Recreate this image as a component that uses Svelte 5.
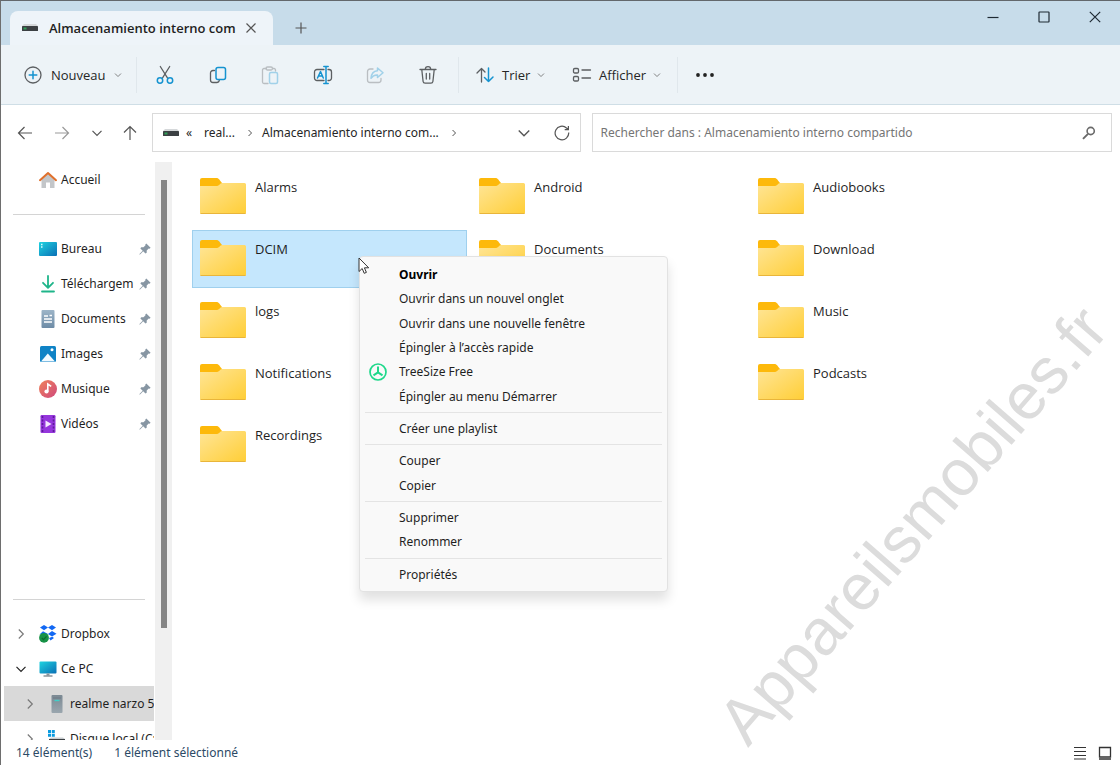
<script lang="ts">
  let selectedFolder = $state('DCIM');
  let search = $state('');

  const quickAccess = [
    { name: 'Bureau', icon: 'desktop' },
    { name: 'Téléchargem', icon: 'download' },
    { name: 'Documents', icon: 'document' },
    { name: 'Images', icon: 'picture' },
    { name: 'Musique', icon: 'music' },
    { name: 'Vidéos', icon: 'video' }
  ];

  const tree = [
    { name: 'Dropbox', icon: 'dropbox', open: false, nested: false, active: false },
    { name: 'Ce PC', icon: 'pc', open: true, nested: false, active: false },
    { name: 'realme narzo 50', icon: 'phone', open: false, nested: true, active: true },
    { name: 'Disque local (C:)', icon: 'disk', open: false, nested: true, active: false }
  ];

  const tools = [
    { icon: 'cut', label: 'Couper', disabled: false },
    { icon: 'copy', label: 'Copier', disabled: false },
    { icon: 'paste', label: 'Coller', disabled: true },
    { icon: 'rename', label: 'Renommer', disabled: false },
    { icon: 'share', label: 'Partager', disabled: true },
    { icon: 'trash', label: 'Supprimer', disabled: false }
  ];

  // null keeps a free slot in the grid
  const folders = [
    'Alarms', 'Android', 'Audiobooks',
    'DCIM', 'Documents', 'Download',
    'logs', null, 'Music',
    'Notifications', null, 'Podcasts',
    'Recordings'
  ];

  const menuGroups = [
    [
      'Ouvrir',
      'Ouvrir dans un nouvel onglet',
      'Ouvrir dans une nouvelle fenêtre',
      'Épingler à l’accès rapide',
      'TreeSize Free',
      'Épingler au menu Démarrer'
    ],
    ['Créer une playlist'],
    ['Couper', 'Copier'],
    ['Supprimer', 'Renommer'],
    ['Propriétés']
  ];
</script>

{#snippet chevron(size)}
  <svg class="line" width={size} height={size} viewBox="0 0 12 12"><path d="M1.5 3.8 6 8.3l4.500-4.500" /></svg>
{/snippet}

{#snippet chevronRight(size)}
  <svg class="line" width={size} height={size} viewBox="0 0 12 12"><path d="M3.800 1.500 8.300 6l-4.500 4.500" /></svg>
{/snippet}

{#snippet drive()}
  <svg width="18" height="18" viewBox="0 0 18 18">
    <path d="M3 5h12l2 2H1z" fill="#d5d8da" />
    <rect x="1" y="7" width="16" height="5" rx=".6" fill="#3c4043" />
    <rect x="2.500" y="8.500" width="3" height="2" fill="#2f9e57" />
  </svg>
{/snippet}

{#snippet toolIcon(name)}
  <svg class="tool-icon" width="20" height="20" viewBox="0 0 20 20">
    {#if name === 'new'}
      <circle cx="10" cy="10" r="8" />
      <path class="blue" d="M10 6.200v7.600M6.200 10h7.600" />
    {:else if name === 'cut'}
      <path d="M5.300 1.500 12.600 13.200M14.700 1.500 7.400 13.200" />
      <circle class="blue" cx="5" cy="15.500" r="2.700" />
      <circle class="blue" cx="15" cy="15.500" r="2.700" />
    {:else if name === 'copy'}
      <path d="M6.500 5.500H5A2.500 2.500 0 0 0 2.500 8v7A2.500 2.500 0 0 0 5 17.500h4A2.500 2.500 0 0 0 11.300 15.500" />
      <rect class="blue" x="8" y="2.500" width="9.500" height="12" rx="2" />
    {:else if name === 'paste'}
      <path d="M6.500 3.500H4A1.500 1.500 0 0 0 2.500 5v12A1.500 1.500 0 0 0 4 18.500h4M12.500 3.500h1.500A1.500 1.500 0 0 1 15.500 5v1" />
      <rect x="6" y="2" width="6.500" height="3" rx="1.500" />
      <rect class="blue" x="9.500" y="7.500" width="8" height="11" rx="1.500" />
    {:else if name === 'rename'}
      <path d="M11 4.500H4A2.500 2.500 0 0 0 1.500 7v6A2.500 2.500 0 0 0 4 15.500h7M15 4.500h1A2.500 2.500 0 0 1 18.500 7v6a2.500 2.500 0 0 1-2.500 2.500h-1" />
      <path class="blue" d="M4.500 13 7.500 6.500 10.300 13M5.500 11h4M13 1.500v17M10.800 1.500h4.400M10.800 18.500h4.400" />
    {:else if name === 'share'}
      <path d="M8 4H5a2.500 2.500 0 0 0-2.500 2.500v8.500A2.500 2.500 0 0 0 5 17.500h8.500a2.500 2.500 0 0 0 2.500-2.500v-1.500" />
      <path class="blue" d="M12.500 3 18 7.800l-5.500 4.700V10C9.500 9.800 7.500 11 6 13.300 6.300 9 8.500 6 12.500 5.700z" />
    {:else if name === 'trash'}
      <path d="M2 4.500h16M7.300 4.300a2.700 2.700 0 0 1 5.400 0M3.800 4.700l1.300 11.800a2 2 0 0 0 2 1.700h5.800a2 2 0 0 0 2-1.700l1.300-11.800M8.300 8.500v5.500M11.700 8.500v5.500" />
    {:else if name === 'sort'}
      <path d="M6.500 17V3.500M2 8l4.500-4.500L10 7" />
      <path class="blue" d="M13.500 3v13.500M9.500 12.500l4 4 4.500-4.500" />
    {:else if name === 'view'}
      <rect x="1.500" y="3.500" width="5" height="4.500" rx="1.200" />
      <rect x="1.500" y="11.500" width="5" height="4.500" rx="1.200" />
      <path d="M10 5h8.500M10 13h8.500" />
    {/if}
  </svg>
{/snippet}

{#snippet placeIcon(name)}
  <svg width="18" height="18" viewBox="0 0 18 18">
    {#if name === 'home'}
      <path d="M2.500 8 9 2.500 15.500 8v9H11v-5.500H7V17H2.500z" fill="#c3c6c9" />
      <path d="M1 9.200 9 2l8 7.200" fill="none" stroke="#e0702c" stroke-width="2" stroke-linecap="round" stroke-linejoin="round" />
    {:else if name === 'desktop'}
      <rect x="0" y="2" width="18" height="14" rx="1" fill="url(#desk)" />
      <path d="M2 4.500h1.500M2 7h1.500" stroke="#d8fbff" stroke-width="1.300" />
    {:else if name === 'download'}
      <path d="M9 1v11M4 7.800l5 5 5-5M3 16.500h12" fill="none" stroke="#1fb58a" stroke-width="1.800" stroke-linecap="round" stroke-linejoin="round" />
    {:else if name === 'document'}
      <rect x="2.500" y="0" width="13" height="18" rx="1" fill="url(#doc)" />
      <path d="M5 6h4M5 9h8M5 12h8M10.500 5.500h2.500" stroke="#fff" stroke-width="1.400" />
    {:else if name === 'picture'}
      <rect x="1" y="1" width="16" height="16" rx="1.500" fill="#0f83c6" />
      <path d="M2 16.500 8.800 8.500l7.200 8z" fill="#f2faff" />
      <circle cx="13" cy="4.800" r="1.500" fill="#fff" />
    {:else if name === 'music'}
      <circle cx="9" cy="9" r="9" fill="url(#mus)" />
      <circle cx="7.500" cy="11.500" r="2.100" fill="#fff" />
      <path d="M8.800 11.500V4l3.400 2.300" fill="none" stroke="#fff" stroke-width="1.600" />
    {:else if name === 'video'}
      <rect x="1.500" y="0" width="15" height="18" rx="1.200" fill="#9536dc" />
      <path d="M3.500 1v16M14.500 1v16" stroke="#5e1b9a" stroke-width="1.600" stroke-dasharray="2 1.500" />
      <path d="M6.500 5.500v7l6-3.500z" fill="#f6e9ff" />
    {:else if name === 'dropbox'}
      <path d="m5 0 4 2.600-4 2.600-4-2.600zM13 0l4 2.600-4 2.600-4-2.600zM13 6l4.500 2.800-4.500 2.800L9 9zM4 6.200 9 9l-3 2-5-2zM10 13l3.300-1.200L15 13l-3.500 2.500z" fill="#1268f3" />
      <circle cx="5" cy="12.800" r="4.900" fill="#179246" />
      <path d="m2.800 13 1.700 1.600 3-3.200" fill="none" stroke="#0c6a2f" stroke-width="1.300" />
    {:else if name === 'pc'}
      <rect x="0.500" y="1.500" width="17" height="12" rx="1" fill="url(#desk)" />
      <path d="M7.500 13.500h3v2h-3z" fill="#8a949b" />
      <path d="M4.500 16h9" stroke="#6f7a82" stroke-width="1.200" />
    {:else if name === 'phone'}
      <rect x="3.500" y="0" width="11" height="18" rx="1" fill="url(#tower)" />
      <path d="M6.500 5.500h5" stroke="#3fd0c9" stroke-width="1.400" />
      <path d="M5 3h8" stroke="#6c7983" />
    {:else if name === 'disk'}
      <path d="M0 0h3v3H0zM3.800 0h3v3h-3zM0 3.800h3v3H0zM3.800 3.800h3v3h-3z" fill="#0a9be0" />
      <path d="M3 7.500h12l2 1.500H1z" fill="#c9cdd0" />
      <rect x="1" y="9" width="16" height="5" fill="#3c4043" />
    {/if}
  </svg>
{/snippet}

<!-- gradients shared by the icons -->
<svg class="defs" width="0" height="0" aria-hidden="true">
  <defs>
    <linearGradient id="desk" x1="0" y1="0" x2="1" y2="1">
      <stop offset="0" stop-color="#1fd3e0" />
      <stop offset="1" stop-color="#0a6fb5" />
    </linearGradient>
    <linearGradient id="doc" x1="0" y1="0" x2="0" y2="1">
      <stop offset="0" stop-color="#9db5c8" />
      <stop offset="1" stop-color="#6d8ba6" />
    </linearGradient>
    <linearGradient id="mus" x1="0" y1="0" x2="1" y2="1">
      <stop offset="0" stop-color="#f0825a" />
      <stop offset="1" stop-color="#cf4a7c" />
    </linearGradient>
    <linearGradient id="tower" x1="0" y1="0" x2="0" y2="1">
      <stop offset="0" stop-color="#7b8993" />
      <stop offset="1" stop-color="#9aa6ae" />
    </linearGradient>
    <linearGradient id="fold" x1="0" y1="0" x2="1" y2="1">
      <stop offset="0" stop-color="#ffe596" />
      <stop offset="1" stop-color="#ffce36" />
    </linearGradient>
  </defs>
</svg>

<div class="window">
  <header class="tabs">
    <div class="tab">
      {@render drive()}
      <span class="tab-title">Almacenamiento interno com</span>
      <button class="icon-btn" aria-label="Fermer l'onglet">
        <svg class="line" width="12" height="12" viewBox="0 0 12 12"><path d="m1.500 1.500 9 9m0-9-9 9" /></svg>
      </button>
    </div>
    <button class="icon-btn add-tab" aria-label="Nouvel onglet">
      <svg class="line" width="12" height="12" viewBox="0 0 12 12"><path d="M6 .5v11M.5 6h11" /></svg>
    </button>
    <div class="controls">
      <button aria-label="Réduire">
        <svg class="line" width="12" height="12" viewBox="0 0 12 12"><path d="M.5 6.500h11" /></svg>
      </button>
      <button aria-label="Agrandir">
        <svg class="line" width="12" height="12" viewBox="0 0 12 12"><rect x="1" y="1" width="10" height="10" rx=".5" /></svg>
      </button>
      <button aria-label="Fermer">
        <svg class="line" width="12" height="12" viewBox="0 0 12 12"><path d="m.8.8 10.400 10.400m0-10.400L.8 11.200" /></svg>
      </button>
    </div>
  </header>

  <div class="toolbar">
    <button class="text-btn new">{@render toolIcon('new')}<span>Nouveau</span>{@render chevron(8)}</button>
    <div class="tools">
      {#each tools as tool}
        <button class="icon-btn" aria-label={tool.label} disabled={tool.disabled}>{@render toolIcon(tool.icon)}</button>
      {/each}
    </div>
    <button class="text-btn sort">{@render toolIcon('sort')}<span>Trier</span>{@render chevron(8)}</button>
    <button class="text-btn view">{@render toolIcon('view')}<span>Afficher</span>{@render chevron(8)}</button>
    <button class="icon-btn more" aria-label="Plus">
      <svg width="20" height="20" viewBox="0 0 20 20" fill="#222">
        <circle cx="3" cy="10" r="1.900" /><circle cx="10" cy="10" r="1.900" /><circle cx="17" cy="10" r="1.900" />
      </svg>
    </button>
  </div>

  <div class="address-row">
    <nav class="history">
      <button class="icon-btn" aria-label="Précédent">
        <svg class="line" width="16" height="16" viewBox="0 0 16 16"><path d="M15 8H1.500M7.500 2l-6 6 6 6" /></svg>
      </button>
      <button class="icon-btn faded" aria-label="Suivant">
        <svg class="line" width="16" height="16" viewBox="0 0 16 16"><path d="M1 8h13.500M8.500 2l6 6-6 6" /></svg>
      </button>
      <button class="icon-btn" aria-label="Récents">{@render chevron(12)}</button>
      <button class="icon-btn" aria-label="Dossier parent">
        <svg class="line" width="16" height="16" viewBox="0 0 16 16"><path d="M8 15V1.500M2 7.500l6-6 6 6" /></svg>
      </button>
    </nav>
    <div class="path">
      {@render drive()}
      <span class="laquo">«</span>
      <button class="crumb">real...</button>
      {@render chevronRight(8)}
      <button class="crumb">Almacenamiento interno com...</button>
      {@render chevronRight(8)}
      <div class="path-actions">
        <button class="icon-btn" aria-label="Historique">{@render chevron(14)}</button>
        <button class="icon-btn" aria-label="Actualiser">
          <svg class="line" width="16" height="16" viewBox="0 0 16 16"><path d="M14.700 7.500A6.800 6.800 0 1 1 12.500 3l1.800 1.500M14.400 1v3.700h-3.700" /></svg>
        </button>
      </div>
    </div>
    <label class="search">
      <input type="text" bind:value={search} aria-label="Rechercher" placeholder="Rechercher dans : Almacenamiento interno compartido" />
      <svg width="14" height="14" viewBox="0 0 14 14" fill="none" stroke="#6a6a6a" stroke-width="1.600">
        <circle cx="8.700" cy="5" r="3.600" /><path d="M6 7.800 1 12.800" stroke-width="1.900" />
      </svg>
    </label>
  </div>

  <div class="body">
    <aside class="sidebar">
      <button class="place"><span class="twist"></span>{@render placeIcon('home')}<span class="name">Accueil</span></button>
      <hr />
      {#each quickAccess as item}
        <button class="place">
          <span class="twist"></span>
          {@render placeIcon(item.icon)}
          <span class="name">{item.name}</span>
          <svg class="pin" width="12" height="12" viewBox="0 0 12 12"><path d="M7.300.4 11.600 4.700 10.500 5.700 9.700 5.500 7.700 7.500 7.700 9.800 6.500 10.600 4.200 8.300 1 11.500.4 11.600.5 11 3.700 7.800 1.400 5.500 2.200 4.300 4.500 4.300 6.500 2.300 6.300 1.500z" /></svg>
        </button>
      {/each}
      <hr class="low" />
      {#each tree as item}
        <button class="place" class:nested={item.nested} class:active={item.active}>
          <span class="twist" class:open={item.open}>
            {#if item.open}{@render chevron(12)}{:else}{@render chevronRight(12)}{/if}
          </span>
          {@render placeIcon(item.icon)}
          <span class="name">{item.name}</span>
        </button>
      {/each}
    </aside>
    <div class="track"><div class="thumb"></div></div>
    <main class="files">
      {#each folders as folder}
        {#if folder}
          <button class="folder" class:selected={folder === selectedFolder} onclick={() => (selectedFolder = folder)}>
            <svg width="46" height="38" viewBox="0 0 46 38">
              <path d="M0 3a2 2 0 0 1 2-2h14c1.500 0 2.300.5 3 1.300L22 6v8H0z" fill="#fdb90b" />
              <path d="M0 9h16c1.500 0 2.500-.4 3.400-1.300l1.200-1.100c.5-.4 1-.6 1.700-.6H44.500A1.500 1.500 0 0 1 46 7.500v28a1.500 1.500 0 0 1-1.500 1.500h-43A1.500 1.500 0 0 1 0 35.500z" fill="url(#fold)" />
              <path d="M.5 36.500h45" stroke="#e9b53a" />
            </svg>
            <span>{folder}</span>
          </button>
        {:else}
          <div></div>
        {/if}
      {/each}
    </main>
  </div>

  <footer class="status">
    <span>14 élément(s)</span>
    <span>1 élément sélectionné</span>
    <div class="modes">
      <button class="icon-btn" aria-label="Détails">
        <svg width="14" height="14" viewBox="0 0 14 14"><path d="M1 1.500h12M1 5.500h12M1 9.500h12M1 13h12" stroke="#333" stroke-width="1.200" /></svg>
      </button>
      <button class="icon-btn" aria-label="Grandes icônes">
        <svg width="14" height="14" viewBox="0 0 14 14"><path d="M1.500 1.500h11v9.500h-11zM1 13h12" fill="none" stroke="#333" stroke-width="1.300" /></svg>
      </button>
    </div>
  </footer>

  <div class="watermark">Appareilsmobiles.fr</div>

  <div class="menu" role="menu">
    {#each menuGroups as group, i}
      {#if i > 0}<hr />{/if}
      {#each group as entry}
        <button role="menuitem" class:default={entry === 'Ouvrir'}>
          <span class="menu-icon">
            {#if entry === 'TreeSize Free'}
              <svg width="18" height="18" viewBox="0 0 18 18" fill="none" stroke="#1fd88b">
                <circle cx="9" cy="9" r="8" stroke-width="1.700" />
                <path d="M9 3.500v6M9 9.300l-4.500 3M9 9.300l4.500 3" stroke-width="2" />
              </svg>
            {/if}
          </span>
          {entry}
        </button>
      {/each}
    {/each}
  </div>

  <svg class="cursor" width="12" height="18" viewBox="0 0 12 18">
    <path d="M1 1v13.500l3.200-3 2 4.800 2.200-.9-2-4.600H10.700z" fill="#fff" stroke="#333" stroke-width="1" />
  </svg>
</div>

<style>
  :global(body) {
    margin: 0;
  }
  .window {
    position: relative;
    box-sizing: border-box;
    height: 100vh;
    min-height: 640px;
    display: flex;
    flex-direction: column;
    overflow: hidden;
    background: #fff;
    border-top: 1px solid #63686c;
    border-left: 1px solid #6e6e6e;
    font-family: "Noto Sans", "Open Sans", sans-serif;
    font-size: 12px;
    line-height: 18px;
    color: #1f1f1f;
  }
  .defs {
    position: absolute;
  }
  button {
    margin: 0;
    padding: 0;
    border: none;
    background: none;
    font: inherit;
    color: inherit;
    text-align: left;
    white-space: nowrap;
  }
  svg {
    display: block;
    flex: none;
  }
  hr {
    margin: 0;
    border: none;
    border-top: 1px solid #d4d4d4;
  }
  .line {
    fill: none;
    stroke: currentColor;
    stroke-width: 1.2;
  }
  .icon-btn {
    display: flex;
    align-items: center;
    justify-content: center;
    color: #555;
  }
  .tabs,
  .toolbar,
  .files {
    font-family: "Open Sans", "Noto Sans", sans-serif;
    font-size: 13px;
  }

  .tabs {
    display: flex;
    align-items: stretch;
    height: 44px;
    flex: none;
    background: #c7dcea;
  }
  .tab {
    display: flex;
    align-items: center;
    box-sizing: border-box;
    width: 263px;
    margin: 10px 0 0 9px;
    padding: 0 16px 0 11px;
    border-radius: 8px 8px 0 0;
    background: #eef4f9;
  }
  .tab-title {
    flex: 1;
    margin-left: 10px;
    font-weight: 600;
  }
  .add-tab {
    width: 56px;
    padding-top: 10px;
  }
  .controls {
    display: flex;
    margin-left: auto;
  }
  .controls button {
    display: flex;
    align-items: center;
    justify-content: center;
    width: 51px;
    height: 32px;
    color: #1f2a33;
  }

  .toolbar {
    display: flex;
    align-items: center;
    height: 59px;
    flex: none;
    padding-left: 22px;
    background: #edf3f7;
    border-bottom: 1px solid #cfdee6;
  }
  .text-btn {
    display: flex;
    align-items: center;
    gap: 7px;
    height: 36px;
    color: #262626;
  }
  .text-btn .line {
    color: #666;
  }
  .new {
    width: 113px;
    gap: 8px;
  }
  .tools {
    display: flex;
    justify-content: space-between;
    align-items: center;
    width: 299px;
    padding: 0 12px 0 10px;
    border-left: 1px solid #e0e7ec;
    border-right: 1px solid #e0e7ec;
  }
  .tools .icon-btn {
    width: 36px;
    height: 36px;
  }
  .tools .icon-btn:disabled {
    opacity: 0.35;
  }
  .tool-icon {
    fill: none;
    stroke: #5c5f62;
    stroke-width: 1.3;
    stroke-linecap: round;
    stroke-linejoin: round;
  }
  .tool-icon .blue {
    stroke: #1593d0;
    stroke-width: 1.5;
  }
  .sort {
    width: 96px;
    padding-left: 16px;
    box-sizing: border-box;
  }
  .view {
    width: 123px;
    padding-left: 17px;
    box-sizing: border-box;
    border-right: 1px solid #e0e7ec;
  }
  .more {
    width: 54px;
    height: 36px;
  }

  .address-row {
    display: grid;
    grid-template-columns: 140px 429fr 521fr;
    column-gap: 11px;
    flex: none;
    padding: 8px 8px 10px 0;
  }
  .history {
    display: flex;
    align-items: center;
    gap: 19px;
    padding-left: 16px;
  }
  .history .icon-btn {
    height: 36px;
  }
  .history .faded {
    width: 20px;
    color: #999;
  }
  .path,
  .search {
    display: flex;
    align-items: center;
    box-sizing: border-box;
    height: 39px;
    min-width: 0;
    border: 1px solid #dadada;
  }
  .path {
    padding: 0 10px 0 9px;
    color: #262626;
  }
  .laquo {
    width: 10px;
    margin-left: 6px;
  }
  .crumb {
    margin: 0 11px 0 8px;
  }
  .path-actions {
    display: flex;
    gap: 23px;
    margin-left: auto;
  }
  .search {
    padding: 0 15px 0 8px;
  }
  .search input {
    flex: 1;
    min-width: 0;
    padding: 0;
    border: none;
    outline: none;
    background: none;
    font: inherit;
    color: inherit;
  }
  .search input::placeholder {
    color: #757575;
    opacity: 1;
  }

  .body {
    display: flex;
    flex: 1;
    min-height: 0;
  }
  .sidebar {
    width: 153px;
    flex: none;
    overflow: hidden;
  }
  .sidebar hr {
    margin: 17px 9px 16px 12px;
  }
  .sidebar hr.low {
    margin-top: 158px;
  }
  .place {
    display: flex;
    align-items: center;
    box-sizing: border-box;
    width: 150px;
    height: 35px;
    margin-left: 3px;
    padding: 0 3px 0 8px;
    overflow: hidden;
  }
  .place.nested {
    padding: 0 0 0 17px;
  }
  .place.active {
    background: #d9d9d9;
  }
  .twist {
    display: flex;
    justify-content: center;
    width: 17px;
    flex: none;
    margin-right: 10px;
    color: #7a7a7a;
  }
  .twist.open {
    color: #222;
  }
  .place .name {
    flex: 1;
    min-width: 0;
    margin-left: 4px;
  }
  .pin {
    fill: #8796a3;
  }
  .track {
    width: 17px;
    flex: none;
    box-sizing: border-box;
    padding: 18px 5px 0 6px;
    margin-left: 1px;
    background: #f0f0f0;
  }
  .thumb {
    height: 80%;
    max-height: 448px;
    background: #858585;
  }

  .files {
    flex: 1;
    display: grid;
    grid-template-columns: repeat(auto-fill, 275px);
    grid-auto-rows: 58px;
    gap: 4px;
    align-content: start;
    padding: 6px 0 0 20px;
  }
  .folder {
    display: flex;
    align-items: flex-start;
    box-sizing: border-box;
    gap: 9px;
    padding: 8px 7px;
    border: 1px solid transparent;
  }
  .folder span {
    padding-top: 1px;
  }
  .folder.selected {
    background: #c5e7fd;
    border-color: #9fd0ee;
  }

  .status {
    display: flex;
    align-items: center;
    gap: 22px;
    height: 25px;
    flex: none;
    padding: 0 8px 0 15px;
    color: #2c4a66;
  }
  .modes {
    display: flex;
    gap: 11px;
    margin-left: auto;
  }

  .watermark {
    position: absolute;
    left: 747px;
    top: 692px;
    font-family: "Liberation Sans", Arial, sans-serif;
    font-size: 65px;
    line-height: 65px;
    color: #dcdcdc;
    white-space: nowrap;
    transform: rotate(-49deg);
    transform-origin: 0 55px;
    pointer-events: none;
  }

  .menu {
    position: absolute;
    left: 358px;
    top: 255px;
    display: flex;
    flex-direction: column;
    box-sizing: border-box;
    width: 309px;
    height: 336px;
    padding: 6px 5px 4px;
    background: #f9f9f9;
    border: 1px solid #e2e2e2;
    border-radius: 4px;
    box-shadow: 0 8px 12px rgba(0, 0, 0, 0.12);
  }
  .menu button {
    display: flex;
    align-items: center;
    flex: 1;
  }
  .menu button:hover {
    background: #ececec;
  }
  .menu .default {
    font-weight: 700;
    color: #000;
  }
  .menu hr {
    margin: 3px 0 4px;
    border-color: #e4e4e4;
  }
  .menu-icon {
    width: 30px;
    padding-left: 4px;
  }
  .cursor {
    position: absolute;
    left: 357px;
    top: 256px;
  }
</style>
